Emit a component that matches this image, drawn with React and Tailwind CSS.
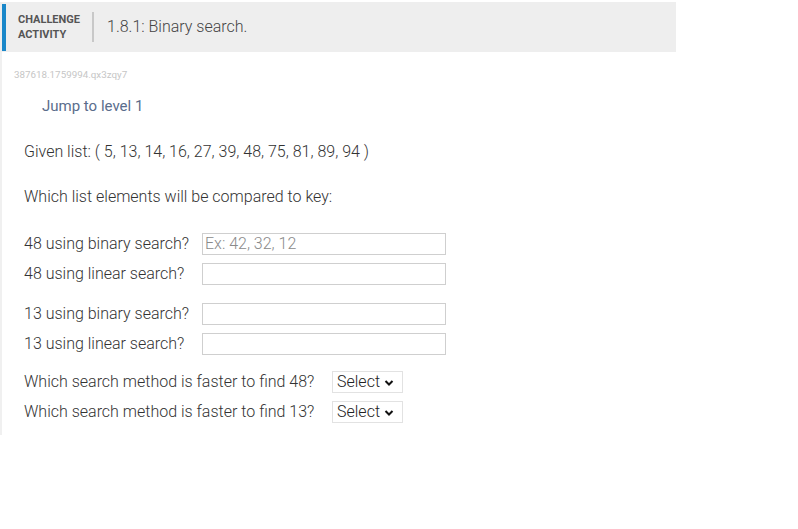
export default function App() {
  const rows = [
    [
      { label: "48 using binary search?", placeholder: "Ex: 42, 32, 12" },
      { label: "48 using linear search?", placeholder: "" },
    ],
    [
      { label: "13 using binary search?", placeholder: "" },
      { label: "13 using linear search?", placeholder: "" },
    ],
  ];

  return (
    <div className="min-h-[529px] bg-white pt-[2px] font-['Roboto',sans-serif] text-[#333]">
      {/* Header */}
      <div className="flex h-[50px] w-[676px] items-center bg-[#eeeeee] pl-[2px]">
        <div className="h-[47px] w-[4px] bg-[#1a87c9]" />
        <div className="ml-[12px] text-[11px] font-bold leading-[15px] text-[#555]">
          <div>CHALLENGE</div>
          <div>ACTIVITY</div>
        </div>
        <div className="ml-[12px] h-[30px] w-[2px] bg-[#c8c8c8]" />
        <div className="ml-[13px] text-[16px] font-light text-[#444]">1.8.1: Binary search.</div>
      </div>

      <div className="ml-0 w-[676px] border-l-2 border-[#f0f0f0] pb-[12px]">
        <div className="pl-[12px] pt-[18px] text-[9.8px] leading-[10px] text-[#c6c6c6]">387618.1759994.qx3zqy7</div>
        <div className="pl-[40px] pt-[16px] text-[15px] leading-[20px] text-[#5a6d8c]">Jump to level 1</div>

        <div className="pl-[22px] pt-[26px] text-[16px] font-light leading-[20px]">
          Given list: ( 5, 13, 14, 16, 27, 39, 48, 75, 81, 89, 94 )
        </div>
        <div className="pl-[22px] pt-[25px] text-[16px] font-light leading-[20px]">
          Which list elements will be compared to key:
        </div>

        <div className="flex flex-col gap-[18px] pl-[22px] pt-[26px]">
          {rows.map((group, gi) => (
            <div key={gi} className="flex flex-col gap-[8px]">
              {group.map((r) => (
                <div key={r.label} className="flex h-[22px] items-center">
                  <span className="w-[178px] text-[16px] font-light">{r.label}</span>
                  <input
                    className="h-[22px] w-[244px] border border-[#cfcfcf] px-[2px] text-[16px] font-light text-[#333] placeholder:text-[#8a8a8a] outline-none"
                    placeholder={r.placeholder}
                  />
                </div>
              ))}
            </div>
          ))}
        </div>

        <div className="flex flex-col gap-[8px] pl-[22px] pt-[16px]">
          {["Which search method is faster to find 48?", "Which search method is faster to find 13?"].map((q) => (
            <div key={q} className="flex h-[22px] items-center">
              <span className="w-[308px] text-[16px] font-light">{q}</span>
              <div className="flex h-[22px] w-[71px] items-center gap-[4px] border border-[#e2e2e2] pl-[4px]">
                <span className="text-[16px] font-light text-[#222]">Select</span>
                <svg width="10" height="8" viewBox="0 0 10 8" className="mt-[1px]">
                  <path d="M1.5 2 L5 5.5 L8.5 2" fill="none" stroke="#111" strokeWidth="2" />
                </svg>
              </div>
            </div>
          ))}
        </div>
      </div>
    </div>
  );
}
